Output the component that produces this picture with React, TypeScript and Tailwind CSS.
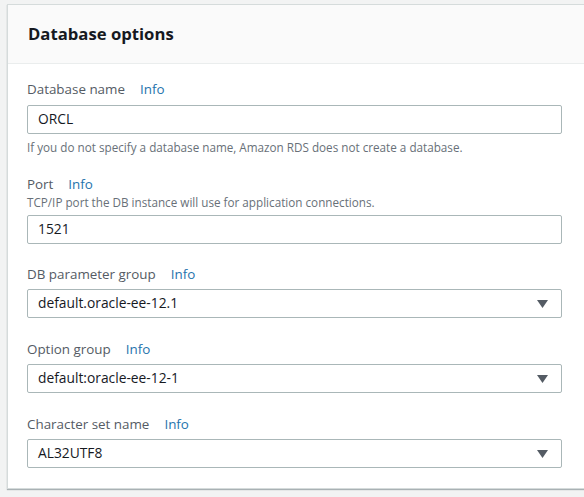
import { ReactNode } from "react";

const font = { fontFamily: '"Open Sans", "Noto Sans", Arial, sans-serif' };

const Label = ({ text }: { text: string }) => (
  <div className="flex items-center h-[20px] text-[13.4px] leading-[20px] text-[#545b64]">
    <span>{text}</span>
    <span className="ml-[15px] text-[#1f74ad]">Info</span>
  </div>
);

const Hint = ({ children }: { children: ReactNode }) => (
  <div className="text-[11.7px] leading-[16px] text-[#687078]">{children}</div>
);

const TextBox = ({ value }: { value: string }) => (
  <div className="h-[29px] w-[535px] border border-[#aab7b8] rounded-[2px] bg-white flex items-center pl-[10px] text-[13.8px] text-[#16191f]">
    {value}
  </div>
);

const Select = ({ value }: { value: string }) => (
  <div className="h-[29px] w-[535px] border border-[#aab7b8] rounded-[2px] bg-white flex items-center justify-between pl-[10px] pr-[13px] text-[13.8px] text-[#16191f]">
    <span>{value}</span>
    <svg width="11" height="8" viewBox="0 0 11 8">
      <path d="M0 0 H11 L5.5 8 Z" fill="#545b64" />
    </svg>
  </div>
);

export default function App() {
  return (
    <div className="w-[584px] h-[497px] overflow-hidden bg-[#f2f3f3] pl-[7px] pt-[4px]" style={font}>
      <div className="w-[600px] bg-white border border-[#d5dbdb] shadow-[0_1px_1px_rgba(0,28,36,0.3)]">
        <div className="h-[59px] bg-[#fafafa] border-b border-[#eaeded] flex items-center pl-[20px]">
          <h2 className="text-[16.7px] font-bold text-[#16191f]">Database options</h2>
        </div>
        <div className="pl-[19px] pt-[15px] pb-[20px]">
          <Label text="Database name" />
          <div className="mt-[6px]">
            <TextBox value="ORCL" />
          </div>
          <div className="mt-[5px]">
            <Hint>If you do not specify a database name, Amazon RDS does not create a database.</Hint>
          </div>

          <div className="mt-[19px]">
            <Label text="Port" />
          </div>
          <Hint>TCP/IP port the DB instance will use for application connections.</Hint>
          <div className="mt-[5px]">
            <TextBox value="1521" />
          </div>

          <div className="mt-[20px]">
            <Label text="DB parameter group" />
          </div>
          <div className="mt-[5px]">
            <Select value="default.oracle-ee-12.1" />
          </div>

          <div className="mt-[21px]">
            <Label text="Option group" />
          </div>
          <div className="mt-[5px]">
            <Select value="default:oracle-ee-12-1" />
          </div>

          <div className="mt-[21px]">
            <Label text="Character set name" />
          </div>
          <div className="mt-[5px]">
            <Select value="AL32UTF8" />
          </div>
        </div>
      </div>
    </div>
  );
}
